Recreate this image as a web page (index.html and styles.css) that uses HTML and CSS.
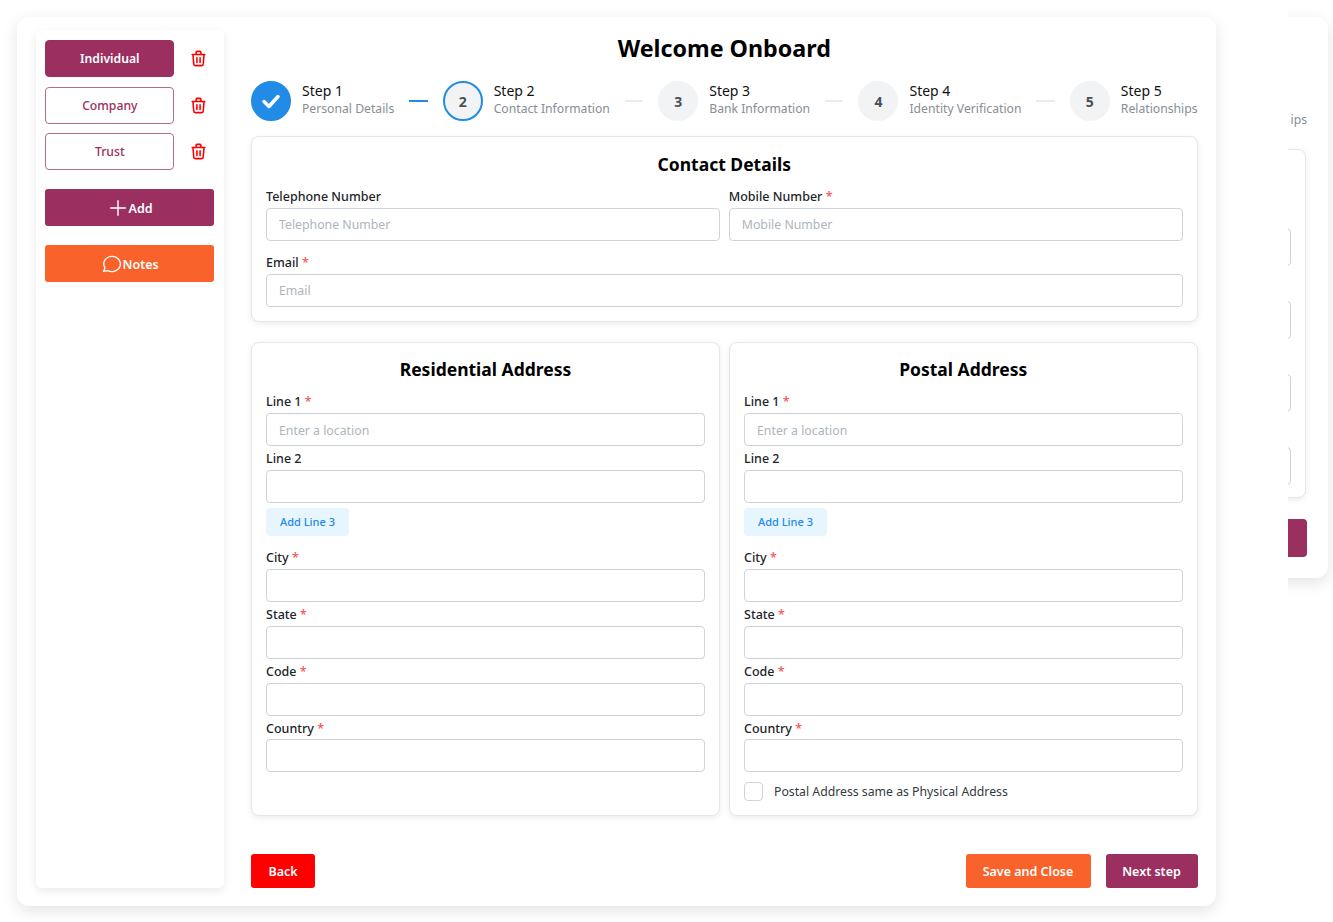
FILE: index.html
```html
<!DOCTYPE html>
<html>
  <head>
    <title>Welcome Onboard</title>
    <link rel="stylesheet" href="styles.css">
  </head>
  <body>
    <div class="peek">
      <div class="peek-card">
        <div class="peek-step">ips</div>
        <div class="peek-panel">
          <div class="peek-input"></div>
          <div class="peek-input"></div>
          <div class="peek-input"></div>
          <div class="peek-input"></div>
        </div>
        <div class="peek-button"></div>
      </div>
    </div>

    <div class="shell">
      <aside class="sidebar">
        <div class="entity-row">
          <button type="button" class="entity entity-active">Individual</button>
          <svg class="trash" viewBox="0 0 24 24"><path d="M4 7h16M10 11v6M14 11v6M5 7l1 12a2 2 0 0 0 2 2h8a2 2 0 0 0 2-2l1-12M9 7V4a1 1 0 0 1 1-1h4a1 1 0 0 1 1 1v3"/></svg>
        </div>
        <div class="entity-row">
          <button type="button" class="entity">Company</button>
          <svg class="trash" viewBox="0 0 24 24"><path d="M4 7h16M10 11v6M14 11v6M5 7l1 12a2 2 0 0 0 2 2h8a2 2 0 0 0 2-2l1-12M9 7V4a1 1 0 0 1 1-1h4a1 1 0 0 1 1 1v3"/></svg>
        </div>
        <div class="entity-row">
          <button type="button" class="entity">Trust</button>
          <svg class="trash" viewBox="0 0 24 24"><path d="M4 7h16M10 11v6M14 11v6M5 7l1 12a2 2 0 0 0 2 2h8a2 2 0 0 0 2-2l1-12M9 7V4a1 1 0 0 1 1-1h4a1 1 0 0 1 1 1v3"/></svg>
        </div>
        <button type="button" class="side-btn side-add">
          <svg class="side-icon" viewBox="0 0 24 24"><path d="M12 4v16M4 12h16"/></svg>Add
        </button>
        <button type="button" class="side-btn side-notes">
          <svg class="side-icon" viewBox="0 0 24 24"><path d="M3 20l1.3-3.9C1.9 12.6 2.8 8 6.400 5.400c3.600-2.500 8.700-2.300 12 .5 3.400 2.900 3.800 7.500 1.100 10.900-2.800 3.400-7.900 4.500-12.100 2.500L3 20"/></svg>Notes
        </button>
      </aside>

      <main class="content">
        <h1 class="title">Welcome Onboard</h1>

        <div class="stepper">
          <div class="step">
            <div class="step-circle step-done">
              <svg viewBox="0 0 24 24"><path d="M5 12.500l5 5 9-10"/></svg>
            </div>
            <div class="step-body"><div class="step-label">Step 1</div><div class="step-desc">Personal Details</div></div>
          </div>
          <div class="step-line step-line-done"></div>
          <div class="step">
            <div class="step-circle step-current">2</div>
            <div class="step-body"><div class="step-label">Step 2</div><div class="step-desc">Contact Information</div></div>
          </div>
          <div class="step-line"></div>
          <div class="step">
            <div class="step-circle">3</div>
            <div class="step-body"><div class="step-label">Step 3</div><div class="step-desc">Bank Information</div></div>
          </div>
          <div class="step-line"></div>
          <div class="step">
            <div class="step-circle">4</div>
            <div class="step-body"><div class="step-label">Step 4</div><div class="step-desc">Identity Verification</div></div>
          </div>
          <div class="step-line"></div>
          <div class="step">
            <div class="step-circle">5</div>
            <div class="step-body"><div class="step-label">Step 5</div><div class="step-desc">Relationships</div></div>
          </div>
        </div>

        <form>
          <section class="card card-contact">
            <h2 class="card-title">Contact Details</h2>
            <div class="two-col">
              <div class="field">
                <label>Telephone Number</label>
                <input type="text" placeholder="Telephone Number" />
              </div>
              <div class="field">
                <label>Mobile Number <span class="req">*</span></label>
                <input type="text" placeholder="Mobile Number" />
              </div>
            </div>
            <div class="field field-email">
              <label>Email <span class="req">*</span></label>
              <input type="text" placeholder="Email" />
            </div>
          </section>

          <div class="addresses">
            <section class="card">
              <h2 class="card-title">Residential Address</h2>
              <div class="field"><label>Line 1 <span class="req">*</span></label><input type="text" placeholder="Enter a location" /></div>
              <div class="field"><label>Line 2</label><input type="text" /></div>
              <button type="button" class="add-line">Add Line 3</button>
              <div class="field"><label>City <span class="req">*</span></label><input type="text" /></div>
              <div class="field"><label>State <span class="req">*</span></label><input type="text" /></div>
              <div class="field"><label>Code <span class="req">*</span></label><input type="text" /></div>
              <div class="field"><label>Country <span class="req">*</span></label><input type="text" /></div>
            </section>

            <section class="card">
              <h2 class="card-title">Postal Address</h2>
              <div class="field"><label>Line 1 <span class="req">*</span></label><input type="text" placeholder="Enter a location" /></div>
              <div class="field"><label>Line 2</label><input type="text" /></div>
              <button type="button" class="add-line">Add Line 3</button>
              <div class="field"><label>City <span class="req">*</span></label><input type="text" /></div>
              <div class="field"><label>State <span class="req">*</span></label><input type="text" /></div>
              <div class="field"><label>Code <span class="req">*</span></label><input type="text" /></div>
              <div class="field"><label>Country <span class="req">*</span></label><input type="text" /></div>
              <label class="same-as">
                <input type="checkbox" />
                <span>Postal Address same as Physical Address</span>
              </label>
            </section>
          </div>

          <div class="actions">
            <button type="button" class="action action-back">Back</button>
            <div class="actions-right">
              <button type="button" class="action action-save">Save and Close</button>
              <button type="button" class="action action-next">Next step</button>
            </div>
          </div>
        </form>
      </main>
    </div>
  </body>
</html>
```

FILE: styles.css
```css
* {
  box-sizing: border-box;
}

html,
body {
  height: 100%;
}

body {
  margin: 0;
  overflow: hidden;
  background-color: #fff;
  color: #212529;
  font-family: "Noto Sans", Arial, sans-serif;
  font-size: 13px;
}

button {
  font-family: inherit;
  border: none;
  cursor: pointer;
}

/* main card */
.shell {
  display: flex;
  width: 1199px;
  height: 889px;
  margin: 17px 0 0 17px;
  padding: 13px 18.500px 18.500px 19px;
  gap: 27.500px;
  background-color: #fff;
  border-radius: 12px;
  box-shadow: 0 5px 16px rgba(0, 0, 0, 0.11);
}

/* sidebar */
.sidebar {
  width: 187.500px;
  flex-shrink: 0;
  padding: 10px 9.500px 0 9.300px;
  background-color: #fff;
  border-radius: 6px;
  box-shadow: 0 3px 10px rgba(0, 0, 0, 0.09);
}

.entity-row {
  display: flex;
  align-items: center;
  justify-content: space-between;
  margin-bottom: 9.500px;
}

.entity {
  width: 129px;
  height: 37px;
  padding: 0;
  font-size: 12.200px;
  font-weight: 500;
  color: #9b3060;
  background-color: #fff;
  border: 1px solid #b9688f;
  border-radius: 4px;
}

.entity-active {
  color: #fff;
  font-weight: 600;
  background-color: #9b3060;
  border-color: #9b3060;
}

.trash {
  width: 19px;
  height: 19px;
  margin-right: 6px;
  fill: none;
  stroke: #f00;
  stroke-width: 2;
  stroke-linecap: round;
  stroke-linejoin: round;
}

.side-btn {
  display: flex;
  align-items: center;
  justify-content: center;
  width: 168.700px;
  height: 37px;
  padding: 1px 0 0;
  color: #fff;
  font-size: 12.500px;
  font-weight: 600;
  border-radius: 3px;
}

.side-add {
  margin-top: 19px;
  background-color: #9b3060;
}

.side-notes {
  margin-top: 19px;
  background-color: #f9622a;
}

.side-icon {
  width: 22px;
  height: 22px;
  fill: none;
  stroke: #fff;
  stroke-width: 1.500;
  stroke-linecap: round;
  stroke-linejoin: round;
}

/* right column */
.content {
  flex: 1;
  min-width: 0;
}

.title {
  margin: 2px 0 0;
  font-size: 23.250px;
  line-height: 32px;
  font-weight: 700;
  color: #000;
  text-align: center;
}

.stepper {
  display: flex;
  align-items: center;
  margin-top: 17px;
}

.step {
  display: flex;
  align-items: center;
  gap: 11px;
}

.step-circle {
  display: flex;
  align-items: center;
  justify-content: center;
  width: 40px;
  height: 40px;
  font-size: 14px;
  font-weight: 700;
  color: #495057;
  background-color: #f1f3f5;
  border: 2px solid #f1f3f5;
  border-radius: 50%;
}

.step-done {
  background-color: #228be6;
  border-color: #228be6;
}

.step-done svg {
  width: 24px;
  height: 24px;
  fill: none;
  stroke: #fff;
  stroke-width: 3.500;
  stroke-linecap: round;
  stroke-linejoin: round;
}

.step-current {
  border-color: #228be6;
}

.step-body {
  padding-bottom: 4px;
}

.step-label {
  font-size: 14px;
  line-height: 19px;
  color: #111;
}

.step-desc {
  font-size: 12.200px;
  line-height: 17px;
  color: #868e96;
}

.step-line {
  flex: 1;
  height: 2px;
  margin: 0 15px;
  background-color: #e9ecef;
}

.step-line-done {
  background-color: #228be6;
}

/* cards */
.card {
  padding: 14px 14px 0;
  background-color: #fff;
  border: 1px solid #e4e7ea;
  border-radius: 8px;
  box-shadow: 0 2px 6px rgba(0, 0, 0, 0.08);
}

.card-contact {
  height: 186px;
  margin-top: 15px;
}

.card-title {
  margin: 0 0 11.500px;
  font-size: 17.500px;
  line-height: 24px;
  font-weight: 700;
  color: #000;
  text-align: center;
}

.card-contact .card-title {
  margin: 1px 0 11px;
}

.two-col {
  display: grid;
  grid-template-columns: 1fr 1fr;
  gap: 9px;
}

.field {
  margin-bottom: 3.100px;
}

.field-email {
  margin-top: 9.250px;
}

.field-email input {
  height: 34px;
}

.field label {
  display: block;
  padding-top: 1px;
  margin-bottom: 1.750px;
  font-size: 12.500px;
  line-height: 18px;
  font-weight: 500;
}

.req {
  color: #fa5252;
}

.field input {
  display: block;
  width: 100%;
  height: 33px;
  padding: 1px 12px 0;
  font-family: inherit;
  font-size: 12.300px;
  background-color: #fff;
  border: 1px solid #ced4da;
  border-radius: 4px;
  outline: none;
}

.field input::placeholder {
  color: #adb5bd;
}

.addresses {
  display: grid;
  grid-template-columns: 469px 468.500px;
  gap: 9px;
  height: 474px;
  margin-top: 19.750px;
}

.add-line {
  display: block;
  width: 83px;
  height: 28px;
  margin: 5px 0 12.250px;
  padding: 0;
  font-size: 11px;
  font-weight: 500;
  color: #228be6;
  background-color: #e7f5ff;
  border-radius: 4px;
}

.same-as {
  display: flex;
  align-items: center;
  gap: 11px;
  margin-top: 10px;
  font-size: 12.250px;
  color: #343a40;
}

.same-as input {
  width: 19px;
  height: 19px;
  margin: 0;
  appearance: none;
  background-color: #fff;
  border: 1px solid #ced4da;
  border-radius: 4px;
}

/* footer buttons */
.actions {
  display: flex;
  justify-content: space-between;
  margin-top: 38.250px;
}

.actions-right {
  display: flex;
  gap: 15px;
}

.action {
  height: 34px;
  padding: 0;
  color: #fff;
  font-size: 12.500px;
  font-weight: 600;
  border-radius: 3px;
}

.action-back {
  width: 64px;
  background-color: #f00;
}

.action-save {
  width: 125px;
  background-color: #f9622a;
}

.action-next {
  width: 92px;
  background-color: #9b3060;
}

.peek {
  position: absolute;
  left: 1288px;
  top: 0;
  width: 45px;
  height: 600px;
  overflow: hidden;
}

.peek-card {
  position: absolute;
  left: -200px;
  top: 17px;
  width: 240px;
  height: 561px;
  background-color: #fff;
  border-radius: 12px;
  box-shadow: 0 5px 16px rgba(0, 0, 0, 0.11);
}

.peek-step {
  position: absolute;
  top: 94px;
  right: 21px;
  font-size: 12.200px;
  line-height: 18px;
  color: #868e96;
}

.peek-panel {
  position: absolute;
  top: 132px;
  right: 22px;
  width: 218px;
  height: 349px;
  padding-top: 78px;
  background-color: #fff;
  border: 1px solid #e4e7ea;
  border-radius: 8px;
  box-shadow: 0 2px 6px rgba(0, 0, 0, 0.08);
}

.peek-input {
  width: 202px;
  height: 38px;
  margin-bottom: 35px;
  background-color: #fff;
  border: 1px solid #ced4da;
  border-radius: 4px;
}

.peek-button {
  position: absolute;
  top: 502px;
  right: 21px;
  width: 100px;
  height: 38px;
  background-color: #9b3060;
  border-radius: 4px;
}
```
